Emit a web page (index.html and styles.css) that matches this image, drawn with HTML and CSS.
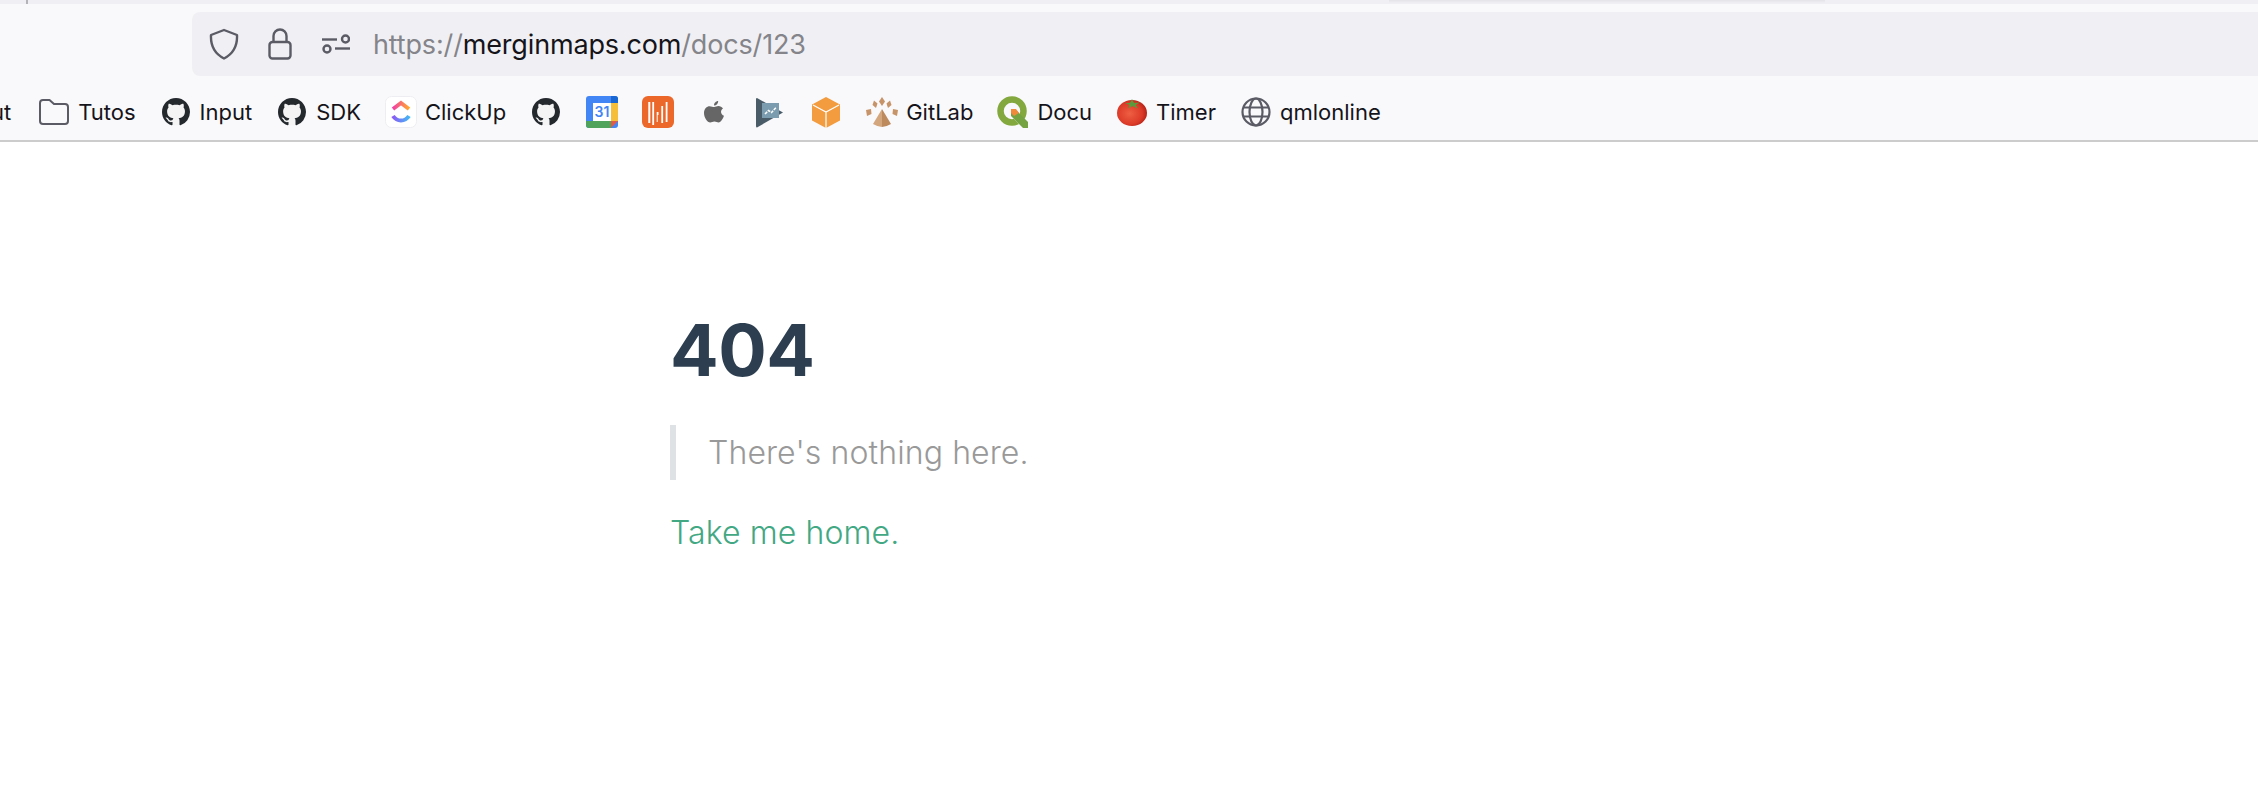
FILE: index.html
```html
<!DOCTYPE html>
<html lang="en">
<head>
    <meta charset="UTF-8">
    <meta name="viewport" content="width=device-width, initial-scale=1.0">
    <title>404</title>
    <link rel="stylesheet" href="styles.css">
</head>
<body>
    <svg class="defs" width="0" height="0">
        <symbol id="octocat" viewBox="0 0 16 16">
            <circle cx="8" cy="8" r="7.6" fill="#f4f4f4"/>
            <path fill="#24292e" d="M8 0C3.58 0 0 3.58 0 8c0 3.54 2.29 6.53 5.47 7.59.4.07.55-.17.55-.38 0-.19-.01-.82-.01-1.49-2.01.37-2.53-.49-2.69-.94-.09-.23-.48-.94-.82-1.13-.28-.15-.68-.52-.01-.53.63-.01 1.08.58 1.23.82.72 1.21 1.87.87 2.33.66.07-.52.28-.87.51-1.07-1.78-.2-3.64-.89-3.64-3.95 0-.87.31-1.59.82-2.15-.08-.2-.36-1.02.08-2.12 0 0 .67-.21 2.2.82.64-.18 1.32-.27 2-.27.68 0 1.36.09 2 .27 1.53-1.04 2.2-.82 2.2-.82.44 1.1.16 1.92.08 2.12.51.56.82 1.27.82 2.15 0 3.07-1.87 3.75-3.65 3.95.29.25.54.73.54 1.48 0 1.07-.01 1.93-.01 2.2 0 .21.15.46.55.38A8.013 8.013 0 0016 8c0-4.42-3.58-8-8-8z"/>
        </symbol>
    </svg>

    <div class="tab-strip">
        <span class="tab-divider"></span>
        <span class="tab-shadow"></span>
    </div>

    <div class="toolbar">
        <div class="url-bar">
            <svg class="url-icon shield" viewBox="0 0 30 32" fill="none" stroke="#5b5b66" stroke-width="2.4" stroke-linejoin="round">
                <path d="M15 2 L28 7 C28.500 17 25 25.500 15 30.500 C5 25.500 1.500 17 2 7 Z"/>
            </svg>
            <svg class="url-icon lock" viewBox="0 0 24 32" fill="none" stroke="#5b5b66" stroke-width="2.4">
                <rect x="1.500" y="14" width="21" height="16.500" rx="3"/>
                <path d="M5.500 14 V8 a6.500 6.500 0 0 1 13 0 V14"/>
            </svg>
            <svg class="url-icon sliders" viewBox="0 0 28 20" fill="none" stroke="#5b5b66" stroke-width="2.400">
                <path d="M0 5.500 H15"/>
                <circle cx="23.500" cy="5" r="3.500"/>
                <circle cx="5" cy="15" r="3.500"/>
                <path d="M13 14.500 H28"/>
            </svg>
            <div class="url-text"><span class="dim">https://</span>merginmaps.com<span class="dim">/docs/123</span></div>
        </div>
    </div>

    <div class="bookmarks">
        <a class="bookmark first"><span>ut</span></a>
        <a class="bookmark">
            <span class="slot">
                <svg class="folder" viewBox="0 0 30 26" fill="none" stroke="#5b5b66" stroke-width="2" stroke-linejoin="round">
                    <path d="M1 4 a3 3 0 0 1 3 -3 h6.500 l4.500 4 h11 a3 3 0 0 1 3 3 v14 a3 3 0 0 1 -3 3 h-22 a3 3 0 0 1 -3 -3 Z"/>
                </svg>
            </span>
            <span>Tutos</span>
        </a>
        <a class="bookmark"><span class="slot"><svg class="gh"><use href="#octocat"/></svg></span><span>Input</span></a>
        <a class="bookmark"><span class="slot"><svg class="gh"><use href="#octocat"/></svg></span><span>SDK</span></a>
        <a class="bookmark">
            <span class="slot">
                <svg class="square" viewBox="0 0 32 32">
                    <defs>
                        <linearGradient id="cu-top" x1="0" x2="1" y1="0" y2="0">
                            <stop offset="0" stop-color="#f23ea6"/>
                            <stop offset="1" stop-color="#ffa92d"/>
                        </linearGradient>
                        <linearGradient id="cu-bottom" x1="0" x2="1" y1="0" y2="0">
                            <stop offset="0" stop-color="#8a5cf6"/>
                            <stop offset="1" stop-color="#45b6f5"/>
                        </linearGradient>
                    </defs>
                    <rect x="0.500" y="0.500" width="31" height="31" rx="6" fill="#fff" stroke="#eeeef2"/>
                    <path d="M8 13 L16 7 L24 13" fill="none" stroke="url(#cu-top)" stroke-width="4"/>
                    <path d="M8 20 C12 26 20 26 24 20" fill="none" stroke="url(#cu-bottom)" stroke-width="4"/>
                </svg>
            </span>
            <span>ClickUp</span>
        </a>
        <a class="bookmark"><span class="slot"><svg class="gh"><use href="#octocat"/></svg></span></a>
        <a class="bookmark">
            <span class="slot">
                <svg class="square" viewBox="0 0 32 32">
                    <rect width="32" height="32" rx="3" fill="#4285f4"/>
                    <path d="M25 0 h4 a3 3 0 0 1 3 3 v4 h-7 Z" fill="#1967d2"/>
                    <rect x="25" y="7" width="7" height="18" fill="#f6bf3a"/>
                    <path d="M0 25 h25 v7 h-22 a3 3 0 0 1 -3 -3 Z" fill="#4fa35a"/>
                    <path d="M25 25 h7 l-7 7 Z" fill="#e05a47"/>
                    <rect x="7" y="7" width="18" height="18" fill="#fff"/>
                    <text class="cal-day" x="16" y="21">31</text>
                </svg>
            </span>
        </a>
        <a class="bookmark">
            <span class="slot">
                <svg class="square" viewBox="0 0 32 32" fill="#fff">
                    <rect width="32" height="32" rx="6" fill="#eb672a"/>
                    <rect x="6.300" y="6" width="2" height="21"/>
                    <rect x="10.300" y="6" width="1.800" height="23"/>
                    <rect x="14.700" y="16" width="1.800" height="3"/>
                    <rect x="14.700" y="19" width="1" height="7"/>
                    <rect x="19.300" y="10" width="1.800" height="17"/>
                    <rect x="23.700" y="6" width="1.800" height="20"/>
                </svg>
            </span>
        </a>
        <a class="bookmark">
            <span class="slot">
                <svg class="apple" viewBox="0 0 20 24" fill="#666">
                    <path d="M14.200 1 C14.300 3.500 12.300 5.600 10 5.500 C9.800 3.200 12 1 14.200 1 Z"/>
                    <path d="M10.200 7 C11.500 7 12.700 6 14.400 6 C16.200 6 18 6.900 19 8.500 C16 10.200 16.500 14.500 20 15.800 C19 18.500 17 22.500 14.600 22.500 C13 22.500 12.300 21.500 10.400 21.500 C8.500 21.500 7.700 22.500 6.200 22.500 C3.400 22.500 0 17.500 0 13 C0 8.800 2.800 6.200 5.600 6.200 C7.500 6.200 8.900 7 10.200 7 Z"/>
                </svg>
            </span>
        </a>
        <a class="bookmark">
            <span class="slot">
                <svg class="tall" viewBox="0 0 28 31">
                    <path d="M1 1 L27 15.500 L1 30.500 Q0 30.500 0 29 V2 Q0 1 1 1 Z" fill="#4a5c68"/>
                    <rect x="6" y="6" width="17" height="15" fill="#7b9bae"/>
                    <path d="M9 17 L12.500 13.500 L15.500 15.500 L20 10.500" fill="none" stroke="#fff" stroke-width="1.500" stroke-dasharray="3 1"/>
                </svg>
            </span>
        </a>
        <a class="bookmark">
            <span class="slot">
                <svg class="tall" viewBox="0 0 28 31">
                    <path d="M14 0 L28 7.500 V23.500 L14 31 L0 23.500 V7.500 Z" fill="#f29b3f"/>
                    <path d="M1 8 L14 15 L27 8 M14 15 V31" fill="none" stroke="#fff" stroke-width="1.200"/>
                </svg>
            </span>
        </a>
        <a class="bookmark">
            <span class="slot">
                <svg class="gitlab" viewBox="0 0 32 30" fill="#c69468">
                    <path d="M16 12 L25 27 Q20 30 16 30 Z" fill="#bd8a5e"/>
                    <path d="M16 12 L7 27 Q12 30 16 30 Z" fill="#d3a67d"/>
                    <path d="M16 0 L19 4.500 L16 9 L13 4.500 Z"/>
                    <path d="M8 3.500 L11.500 6.500 L10 11 L6.500 8 Z"/>
                    <path d="M24 3.500 L25.500 8 L22 11 L20.500 6.500 Z"/>
                    <path d="M0 13 L5 12 L5.500 17 L1 19 Z"/>
                    <path d="M32 13 L31 19 L26.500 17 L27 12 Z"/>
                </svg>
            </span>
            <span>GitLab</span>
        </a>
        <a class="bookmark">
            <span class="slot">
                <svg class="square" viewBox="0 0 32 32">
                    <circle cx="15" cy="15" r="11.500" fill="none" stroke="#83a83d" stroke-width="6.500"/>
                    <path d="M18 20 L26 28 L32 28 L32 32 L26 32 L14 20 Z" fill="#f9f9fb"/>
                    <path d="M14 15 L20 15 L31 26 L31 32 L26 32 L14 20 Z" fill="#76a342"/>
                    <path d="M14 13 L19 13 L22 17 L17 20 L14 17 Z" fill="#ee8a3a"/>
                </svg>
            </span>
            <span>Docu</span>
        </a>
        <a class="bookmark">
            <span class="slot">
                <svg class="tomato" viewBox="0 0 30 28">
                    <defs>
                        <radialGradient id="tomato-skin" cx="0.420" cy="0.520" r="0.600">
                            <stop offset="0" stop-color="#ee5f42"/>
                            <stop offset="0.700" stop-color="#dc3a28"/>
                            <stop offset="1" stop-color="#b02016"/>
                        </radialGradient>
                    </defs>
                    <ellipse cx="15" cy="15" rx="15" ry="13" fill="url(#tomato-skin)"/>
                    <path d="M8 5 L13 5 L15 1 L17 5 L23 4.500 L18.500 7 L21 10.500 L15.500 8 L11.500 10.500 L12.500 7 Z" fill="#5b9a3c"/>
                </svg>
            </span>
            <span>Timer</span>
        </a>
        <a class="bookmark">
            <span class="slot">
                <svg class="globe" viewBox="0 0 30 30" fill="none" stroke="#5b5b66" stroke-width="2.200">
                    <circle cx="15" cy="15" r="13.500"/>
                    <ellipse cx="15" cy="15" rx="6.500" ry="13.500"/>
                    <path d="M2.500 10.500 H27.500 M2.500 19.500 H27.500"/>
                </svg>
            </span>
            <span>qmlonline</span>
        </a>
    </div>

    <main class="page">
        <h1>404</h1>
        <blockquote>There's nothing here.</blockquote>
        <a class="home-link">Take me home.</a>
    </main>
</body>
</html>
```

FILE: styles.css
```css
* {
    margin: 0;
    padding: 0;
    box-sizing: border-box;
}

body {
    font-family: 'Inter', 'Liberation Sans', sans-serif;
    background: #ffffff;
    overflow: hidden;
}

.defs {
    display: block;
    height: 0;
}

.tab-strip {
    height: 4px;
    background: #f0f0f4;
    display: flex;
    overflow: hidden;
}

.tab-divider {
    width: 2px;
    height: 4px;
    margin-left: 26px;
    background: #b4b4b8;
}

.tab-shadow {
    width: 436px;
    height: 3px;
    margin-left: 1361px;
    background: linear-gradient(#e4e4e8, #f0f0f4);
}

.toolbar {
    height: 72px;
    padding: 8px 0 0 192px;
    background: #f9f9fb;
}

.url-bar {
    height: 64px;
    display: flex;
    align-items: center;
    padding-left: 17px;
    background: #f0f0f4;
    border-radius: 8px 0 0 8px;
}

.url-icon {
    flex-shrink: 0;
}

.shield {
    width: 30px;
    height: 32px;
    margin-right: 29px;
}

.lock {
    width: 24px;
    height: 32px;
    margin-right: 30px;
}

.sliders {
    width: 28px;
    height: 20px;
    margin-right: 23px;
}

.url-text {
    font-size: 27px;
    letter-spacing: -0.16px;
    color: #15141a;
    white-space: nowrap;
}

.dim {
    color: #84848a;
}

.bookmarks {
    height: 66px;
    display: flex;
    align-items: center;
    gap: 24px;
    padding-top: 8px;
    background: #f9f9fb;
    border-bottom: 2px solid #cccccc;
    overflow: hidden;
    font-size: 22px;
    color: #15141a;
}

.bookmark {
    display: flex;
    align-items: center;
    gap: 8px;
    flex-shrink: 0;
    white-space: nowrap;
}

.first {
    margin-left: -9px;
    margin-right: 3px;
}

.slot {
    width: 32px;
    height: 32px;
    display: flex;
    align-items: center;
    justify-content: center;
    flex-shrink: 0;
}

.folder {
    width: 30px;
    height: 26px;
}

.gh {
    width: 28px;
    height: 28px;
}

.square {
    width: 32px;
    height: 32px;
}

.cal-day {
    font-family: 'Inter', sans-serif;
    font-size: 14px;
    font-weight: 600;
    fill: #4285f4;
    text-anchor: middle;
}

.apple {
    width: 20px;
    height: 24px;
}

.tall {
    width: 28px;
    height: 31px;
}

.gitlab {
    width: 32px;
    height: 30px;
}

.tomato {
    width: 30px;
    height: 28px;
}

.globe {
    width: 30px;
    height: 30px;
}

.page {
    padding: 164px 0 0 670px;
}

h1 {
    font-size: 72px;
    font-weight: 700;
    line-height: 88px;
    letter-spacing: -0.5px;
    color: #2c3e50;
}

blockquote {
    margin-top: 31px;
    height: 55px;
    display: flex;
    align-items: center;
    padding-left: 32px;
    border-left: 6px solid #dfe2e5;
    font-size: 32px;
    font-weight: 350;
    letter-spacing: 0.1px;
    color: #999999;
}

.home-link {
    display: block;
    margin-top: 32px;
    font-size: 32px;
    font-weight: 350;
    letter-spacing: 0.1px;
    line-height: 42px;
    color: #42a883;
}
```
